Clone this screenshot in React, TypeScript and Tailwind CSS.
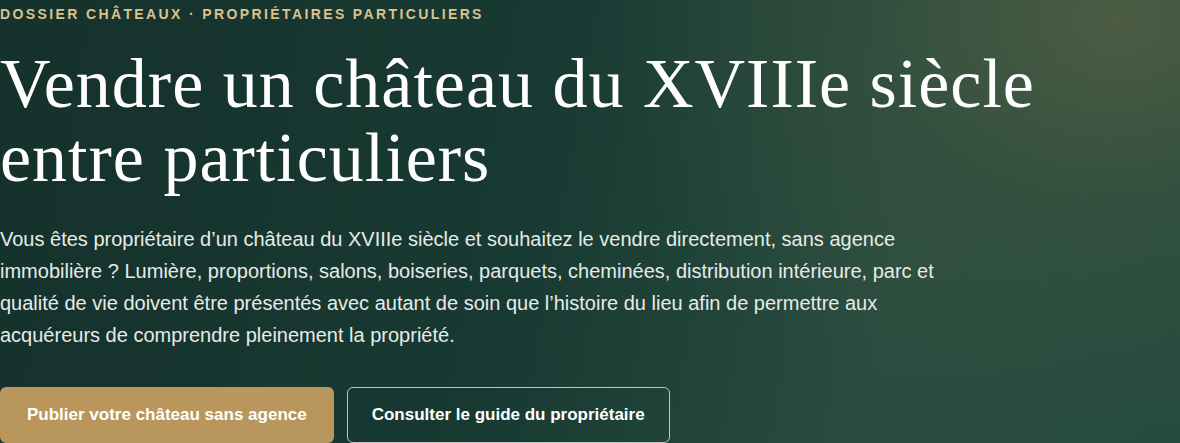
import React from 'react';

const App: React.FC = () => {
  return (
    <div className="relative w-[1180px] h-[443px] overflow-hidden bg-[#16332d]">
      <div className="absolute inset-0 bg-[linear-gradient(100deg,#15312b_0%,#183a32_45%,#2a4d40_75%,#254b3f_100%)]" />
      <div className="absolute inset-0 bg-[radial-gradient(ellipse_520px_420px_at_1120px_20px,rgba(88,98,68,0.75)_0%,rgba(70,88,62,0.35)_45%,rgba(40,70,58,0)_100%)]" />
      <div className="relative flex flex-col items-start pt-[6px] font-['Liberation_Sans',Arial,sans-serif]">
        <p className="text-[14px] leading-[17px] font-bold tracking-[0.17em] text-[#dcc28e] uppercase">
          Dossier châteaux · Propriétaires particuliers
        </p>
        <h1 className="mt-[24px] text-[70px] leading-[74px] text-white font-['Liberation_Serif',Georgia,serif] tracking-[1px]">
          Vendre un château du XVIIIe siècle
          <br />
          entre particuliers
        </h1>
        <p className="mt-[28px] max-w-[945px] text-[20px] leading-[32px] text-[#e6ebe7]">
          Vous êtes propriétaire d’un château du XVIIIe siècle et souhaitez le vendre directement, sans agence
          immobilière ? Lumière, proportions, salons, boiseries, parquets, cheminées, distribution intérieure, parc et
          qualité de vie doivent être présentés avec autant de soin que l’histoire du lieu afin de permettre aux
          acquéreurs de comprendre pleinement la propriété.
        </p>
        <div className="mt-[36px] flex gap-[13px]">
          <button className="h-[56px] px-[27px] rounded-[6px] bg-[#b8965c] text-white text-[17px] font-bold">
            Publier votre château sans agence
          </button>
          <button className="h-[56px] px-[24px] rounded-[6px] border border-white/70 text-white text-[17px] font-bold">
            Consulter le guide du propriétaire
          </button>
        </div>
      </div>
    </div>
  );
};

export default App;
